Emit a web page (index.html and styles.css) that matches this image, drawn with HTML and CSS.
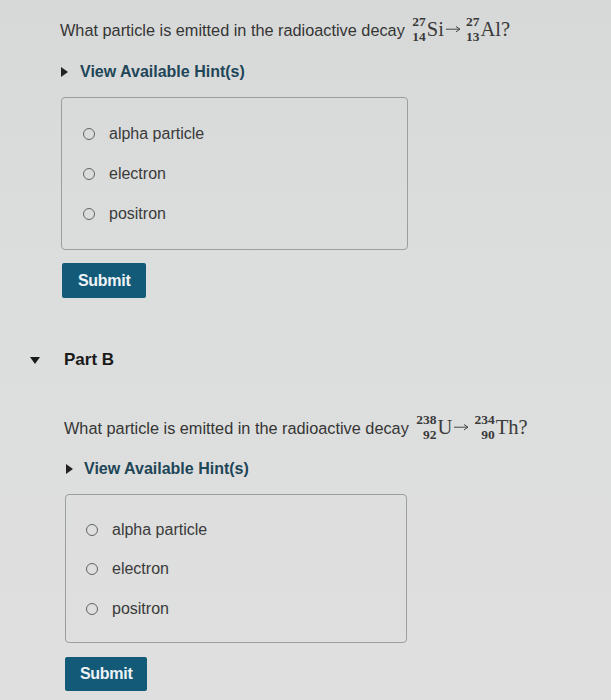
FILE: index.html
```html
<!DOCTYPE html>
<html>
<head>
<meta charset="utf-8">
<link rel="stylesheet" href="styles.css">
</head>
<body>
<div class="page">
  <section class="part part-a">
    <p class="question">What particle is emitted in the radioactive decay <span class="nums"><span>27</span><span>14</span></span><span class="el">Si</span><svg class="arrow" width="15" height="8" viewBox="0 0 15 8"><path d="M0 4.2H13.5M10 1.5L14 4.2L10 6.9" fill="none" stroke="#444" stroke-width="1"/></svg><span class="nums"><span>27</span><span>13</span></span><span class="el">Al</span><span class="el">?</span></p>
    <div class="hint"><span class="tri-right"></span><span class="hint-text">View Available Hint(s)</span></div>
    <div class="choices">
      <label class="choice"><span class="radio"></span><span>alpha particle</span></label>
      <label class="choice"><span class="radio"></span><span>electron</span></label>
      <label class="choice"><span class="radio"></span><span>positron</span></label>
    </div>
    <button class="submit">Submit</button>
  </section>

  <div class="part-header"><span class="tri-down"></span><span class="part-title">Part B</span></div>

  <section class="part part-b">
    <p class="question">What particle is emitted in the radioactive decay <span class="nums"><span>238</span><span>92</span></span><span class="el">U</span><svg class="arrow" width="15" height="8" viewBox="0 0 15 8"><path d="M0 4.2H13.5M10 1.5L14 4.2L10 6.9" fill="none" stroke="#444" stroke-width="1"/></svg><span class="nums"><span>234</span><span>90</span></span><span class="el">Th</span><span class="el">?</span></p>
    <div class="hint"><span class="tri-right"></span><span class="hint-text">View Available Hint(s)</span></div>
    <div class="choices">
      <label class="choice"><span class="radio"></span><span>alpha particle</span></label>
      <label class="choice"><span class="radio"></span><span>electron</span></label>
      <label class="choice"><span class="radio"></span><span>positron</span></label>
    </div>
    <button class="submit">Submit</button>
  </section>
</div>
</body>
</html>
```

FILE: styles.css
```css
html, body {
  margin: 0;
  padding: 0;
}
body {
  width: 611px;
  height: 700px;
  overflow: hidden;
  background: linear-gradient(180deg, #d7d9d8 0%, #dcdedd 40%, #dedfde 100%);
  font-family: "Liberation Sans", Arial, sans-serif;
  color: #353535;
}
.page {
  padding-top: 18px;
}
.part-a {
  padding-left: 60px;
}
.part-b {
  padding-left: 64px;
}
.question {
  margin: 0;
  height: 24px;
  line-height: 24px;
  font-size: 16.3px;
  white-space: nowrap;
}
.nums {
  display: inline-flex;
  flex-direction: column;
  align-items: flex-end;
  vertical-align: 10px;
  font-family: "Liberation Serif", "Times New Roman", serif;
  font-weight: bold;
  font-size: 13.5px;
  line-height: 15px;
  color: #3a3a3a;
  margin: -15px 1px -15px 3px;
}
.el {
  font-family: "Liberation Serif", "Times New Roman", serif;
  font-size: 20.5px;
  line-height: 20px;
  color: #3a3a3a;
}
.arrow {
  display: inline-block;
  vertical-align: 3px;
  margin: 0 2px 0 2px;
}
.hint {
  margin-top: 20px;
  height: 20px;
  display: flex;
  align-items: center;
}
.tri-right {
  width: 0;
  height: 0;
  border-top: 5px solid transparent;
  border-bottom: 5px solid transparent;
  border-left: 7px solid #222;
  margin-left: 1px;
}
.hint-text {
  margin-left: 12px;
  font-weight: bold;
  font-size: 16px;
  color: #1e4658;
}
.choices {
  margin-top: 15px;
  border: 1px solid #9c9d9d;
  border-radius: 4px;
  box-sizing: border-box;
}
.part-a .choices {
  margin-left: 1px;
  width: 347px;
  padding: 16px 0 15px 21px;
}
.part-b .choices {
  margin-left: 1px;
  width: 342px;
  padding: 15px 0 13px 20px;
}
.choice {
  display: flex;
  align-items: center;
  height: 40px;
  font-size: 16px;
  color: #3a3a3a;
}
.part-b .choice {
  height: 39.5px;
}
.radio {
  width: 10px;
  height: 10px;
  border: 1.7px solid #626363;
  border-radius: 50%;
  margin-right: 14px;
  flex: none;
}
.submit {
  display: block;
  margin-top: 13px;
  margin-left: 2px;
  height: 35px;
  padding: 0 16px;
  background: #125a78;
  border: none;
  border-radius: 2px;
  color: #eef3f5;
  font-family: "Liberation Sans", Arial, sans-serif;
  font-weight: bold;
  font-size: 16px;
  letter-spacing: -0.3px;
}
.part-b .submit {
  margin-top: 14px;
  margin-left: 1px;
  height: 34px;
  padding: 0 15px;
}
.part-header {
  margin-top: 52px;
  height: 20px;
  display: flex;
  align-items: center;
  padding-left: 30px;
}
.tri-down {
  width: 0;
  height: 0;
  border-left: 5.5px solid transparent;
  border-right: 5.5px solid transparent;
  border-top: 7px solid #1a1a1a;
}
.part-title {
  margin-left: 24px;
  font-weight: bold;
  font-size: 17px;
  color: #1a1a1a;
}
.part-b .question {
  margin-top: 46px;
}
.part-b .hint {
  margin-top: 19px;
}
.part-b .tri-right {
  margin-left: 2px;
}
.part-b .hint-text {
  margin-left: 11px;
}
```
